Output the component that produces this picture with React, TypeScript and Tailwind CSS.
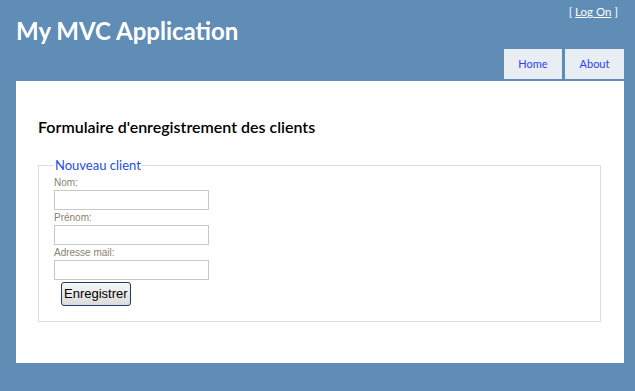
export default function App() {
  return (
    <div className="h-[391px] bg-[#5f8db6] font-['Lato',sans-serif] overflow-hidden">
      {/* header */}
      <div className="flex justify-between pl-4 pr-[11px]">
        <h1 className="pt-[16px] text-[24px] leading-[30px] font-bold text-white">My MVC Application</h1>
        <div className="flex flex-col items-end">
          <div className="pt-[5px] pr-[6px] h-[20px] text-[11.5px] leading-[14px] text-white">
            [ <a href="#" className="underline">Log On</a> ]
          </div>
          <ul className="mt-[29px] flex gap-[3px]">
            <li className="w-[58px] h-[30px] flex items-center justify-center bg-[#e8eef4] text-[11px] text-[#2e3ff0]">Home</li>
            <li className="w-[59px] h-[30px] flex items-center justify-center bg-[#e8eef4] text-[11px] text-[#2e3ff0]">About</li>
          </ul>
        </div>
      </div>

      {/* main */}
      <div className="mt-[2px] ml-4 mr-[11px] bg-white pt-[37px] pl-[22px] pr-[23px] pb-[41px]">
        <h2 className="text-[16px] leading-[18px] font-semibold text-black">
          Formulaire d'enregistrement des clients
        </h2>
        <fieldset className="mt-[21px] border border-[#dcdcdc] pl-[15px] pb-[15px]">
          <legend className="px-[1px] text-[13px] leading-[16px] text-[#1a4fe0]">Nouveau client</legend>
          <div className="pt-[2px] font-['Liberation_Sans',sans-serif] text-[10px] text-[#8a826e]">
            <label className="block h-[15px] leading-[15px]">Nom:</label>
            <input className="block w-[155px] h-[20px] border border-[#c8c8c8]" />
            <label className="block h-[15px] leading-[15px]">Prénom:</label>
            <input className="block w-[155px] h-[20px] border border-[#c8c8c8]" />
            <label className="block h-[15px] leading-[15px]">Adresse mail:</label>
            <input className="block w-[155px] h-[20px] border border-[#c8c8c8]" />
          </div>
          <button className="mt-[1px] ml-[7px] h-[24px] px-[2px] rounded-[3px] border border-[#1d3c6a] bg-gradient-to-b from-[#f6f6f6] to-[#dcdcdc] font-['Liberation_Sans',sans-serif] text-[13px] text-black">
            Enregistrer
          </button>
        </fieldset>
      </div>
    </div>
  );
}
